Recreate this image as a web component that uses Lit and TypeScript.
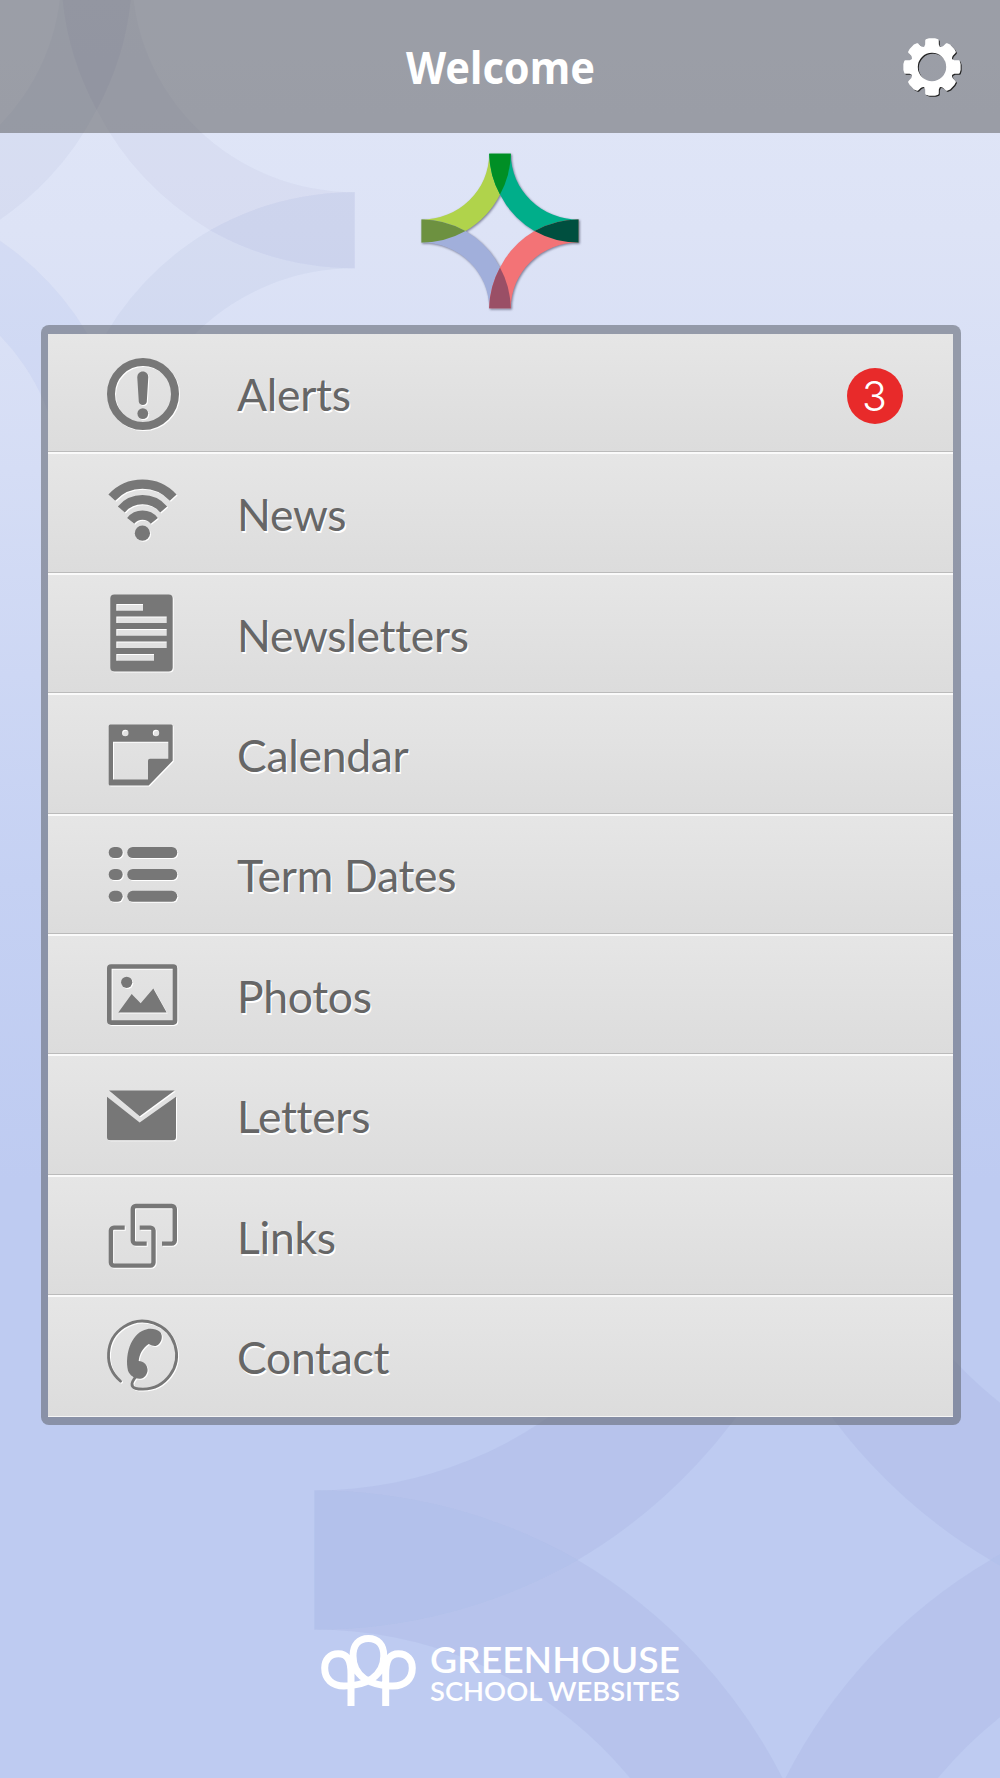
import { LitElement, html, css, svg } from "lit";
import type { TemplateResult } from "lit";
import { customElement, property } from "lit/decorators.js";

/* ---- Four-armed star built from quarter rings centred on its corners ---- */
const HW = 78.5;
const HH = 77.3;
const BX = 10.8;
const BY = 11.5;
const OUTER = `${HW + BX} ${HH + BY}`;
const INNER = `${HW - BX} ${HH - BY}`;
const CX = 34.5;
const CY = 36.5;
const BAND = `M${-HW} ${-BY}A${INNER} 0 0 0 ${-BX} ${-HH}L${BX} ${-HH}A${OUTER} 0 0 1 0 ${-CY}A${OUTER} 0 0 1 ${-CX} 0A${OUTER} 0 0 1 ${-HW} ${BY}Z`;
const LENS_TOP = `M${-BX} ${-HH}A${OUTER} 0 0 0 0 ${-CY}A${OUTER} 0 0 0 ${BX} ${-HH}Z`;
const LENS_LEFT = `M${-HW} ${-BY}A${OUTER} 0 0 1 ${-CX} 0A${OUTER} 0 0 1 ${-HW} ${BY}Z`;

interface StarColours {
  tl: string; tr: string; bl: string; br: string;
  top: string; left: string; right: string; bottom: string;
}

const star = (c: StarColours) => svg`
  <path d=${BAND} fill=${c.tl}></path>
  <path d=${BAND} fill=${c.tr} transform="scale(-1 1)"></path>
  <path d=${BAND} fill=${c.bl} transform="scale(1 -1)"></path>
  <path d=${BAND} fill=${c.br} transform="scale(-1 -1)"></path>
  <path d=${LENS_TOP} fill=${c.top}></path>
  <path d=${LENS_LEFT} fill=${c.left}></path>
  <path d=${LENS_LEFT} fill=${c.right} transform="scale(-1 1)"></path>
  <path d=${LENS_TOP} fill=${c.bottom} transform="scale(1 -1)"></path>`;

const LOGO: StarColours = {
  tl: "#b0d34b", tr: "#00ae8a", bl: "#a1afdb", br: "#f37376",
  top: "#008f25", left: "#6d9140", right: "#004f3f", bottom: "#9a4f66",
};

const TINT_A: StarColours = {
  tl: "rgba(140,160,200,.09)", tr: "rgba(150,155,200,.09)",
  bl: "rgba(140,160,225,.1)", br: "rgba(130,160,200,.09)",
  top: "rgba(120,130,190,.03)", left: "none",
  right: "rgba(150,170,255,.03)", bottom: "rgba(150,170,255,.05)",
};

const TINT_B: StarColours = {
  tl: "rgba(150,160,213,.17)", tr: "rgba(150,160,213,.17)",
  bl: "rgba(150,160,213,.17)", br: "rgba(150,160,213,.17)",
  top: "none", left: "rgba(185,210,245,.22)", right: "rgba(185,210,245,.22)", bottom: "none",
};

/* ---- Menu icons, each on a 90 x 120 canvas ---- */
const ICONS: Record<string, TemplateResult> = {
  alert: svg`
    <circle cx="43" cy="62" r="32" class="line" stroke-width="8"></circle>
    <path d="M42.8 39.6C46 39.6 48.4 42 48.3 45.5L46.8 69.5C46.6 71.8 45 73 42.8 73S39 71.8 38.8 69.5L37.3 45.5C37.2 42 39.6 39.6 42.8 39.6Z"></path>
    <circle cx="42.8" cy="81.6" r="5.4"></circle>`,
  wifi: svg`
    <path class="line" stroke-width="9.2" d="M11.8 45.7A41.7 41.7 0 0 1 73.2 45.7M21.3 57.4A28 28 0 0 1 63.7 57.4M30.7 68.8A15.2 15.2 0 0 1 54.3 68.8"></path>
    <circle cx="42.4" cy="81.2" r="7.6"></circle>`,
  news: svg`
    <path fill-rule="evenodd" d="M14.3 21.4H68.7a4 4 0 0 1 4 4V94.4a4 4 0 0 1-4 4H14.3a4 4 0 0 1-4-4V25.4a4 4 0 0 1 4-4Z
      M16.3 31.1V37.7H43V31.1ZM16.3 43.4V50H66.7V43.4ZM16.3 56.1V62.7H66.7V56.1ZM16.3 68.4V75H66.7V68.4ZM16.3 81.1V87.7H54V81.1Z"></path>`,
  calendar: svg`
    <path fill-rule="evenodd" d="M10.2 31.4H71.2a1.5 1.5 0 0 1 1.5 1.5V67.7L48.7 92.4H10.2a1.5 1.5 0 0 1-1.5-1.5V32.9a1.5 1.5 0 0 1 1.5-1.5Z
      M13 48.7V86.4H48V67.7a2 2 0 0 1 2-2H68.3V48.7Z
      M22.1 40a3.2 3.2 0 1 0 6.4 0a3.2 3.2 0 1 0-6.4 0ZM52.8 40a3.2 3.2 0 1 0 6.4 0a3.2 3.2 0 1 0-6.4 0Z"></path>`,
  list: svg`${[33, 55, 76.8].map((y) => svg`
    <rect x="8.7" y=${y} width="14" height="11" rx="5.5"></rect>
    <rect x="27.3" y=${y} width="50" height="11" rx="5.5"></rect>`)}`,
  photo: svg`
    <rect x="9.3" y="32.5" width="65.7" height="56.1" rx="1.8" class="line" stroke-width="4.6"></rect>
    <circle cx="26.7" cy="48.3" r="5.6"></circle>
    <path d="M18.3 78.6L31.7 59.9L40.7 69.2L53.3 54.6L66.7 78.6Z"></path>`,
  mail: svg`
    <path d="M9 36.5H74.7L39.7 62.2Z"></path>
    <path d="M7 42.8L39.7 68.5L76 42.8V83.2a3 3 0 0 1-3 3H10a3 3 0 0 1-3-3Z"></path>`,
  links: svg`
    <path class="line" stroke-width="4.4" d="M46.7 68.6H35.8a3 3 0 0 1-3-3V34a3 3 0 0 1 3-3H71.8a3 3 0 0 1 3 3V65.6a3 3 0 0 1-3 3H62
      M24.7 52.6H13.9a3 3 0 0 0-3 3V87.6a3 3 0 0 0 3 3H50.5a3 3 0 0 0 3-3V55.6a3 3 0 0 0-3-3H39.7"></path>`,
  phone: svg`
    <path class="line" stroke-width="2.8" stroke-linecap="round" d="M20.6 86.2A34 34 0 1 1 43 94.2C38 94.2 31.5 93.9 32 88.6C32.3 86.1 34 84.6 35.4 82"></path>
    <path d="M47 34.2C50.5 33.2 56.5 33.8 60.2 37C63 40.5 62 46 58.7 49.3C56 52.2 52.5 51.1 48.7 49.1C43 52.8 39.3 59.3 38.7 66C43.5 66.1 47.4 69.8 47.6 74.8C47.6 79.5 44 83.9 40 83.7C35 84 30 81 28 75.8C26 67.8 27 56.8 31 48.3C34.6 40.8 40 35.6 47 34.2Z"></path>`,
};

interface MenuItem { label: string; icon: string; count?: number }

const ITEMS: MenuItem[] = [
  { label: "Alerts", icon: "alert", count: 3 },
  { label: "News", icon: "wifi" },
  { label: "Newsletters", icon: "news" },
  { label: "Calendar", icon: "calendar" },
  { label: "Term Dates", icon: "list" },
  { label: "Photos", icon: "photo" },
  { label: "Letters", icon: "mail" },
  { label: "Links", icon: "links" },
  { label: "Contact", icon: "phone" },
];

/* Outline of an eight-toothed gear centred on the origin. */
const gearPath = (): string => {
  const pt = (r: number, deg: number) => {
    const a = (deg * Math.PI) / 180;
    return `${(r * Math.cos(a)).toFixed(2)} ${(r * Math.sin(a)).toFixed(2)}`;
  };
  const points: string[] = [];
  for (let i = 0; i < 8; i++) {
    const a = i * 45;
    points.push(pt(21.8, a - 21), pt(23.4, a - 17), pt(27.6, a - 14.2), pt(28.3, a - 12.5), pt(28.8, a - 6));
    points.push(pt(28.8, a + 6), pt(28.3, a + 12.5), pt(27.6, a + 14.2), pt(23.4, a + 17), pt(21.8, a + 21));
  }
  return `M${points.join("L")}ZM14.2 0A14.2 14.2 0 1 0 -14.2 0A14.2 14.2 0 1 0 14.2 0Z`;
};

@customElement("menu-row")
class MenuRow extends LitElement {
  @property({ attribute: false }) item!: MenuItem;

  static styles = css`
    :host { display: flex; align-items: flex-start; overflow: hidden; box-sizing: border-box; }
    .row {
      flex: 1; height: 120.4px; flex-shrink: 0; display: flex; align-items: center;
      padding: 0 50px 0 52px; box-sizing: border-box;
    }
    :host(:first-child) .row { margin-top: -1.9px; }
    .icon {
      width: 90px; height: 120px; flex: none; fill: #777; align-self: flex-start;
      filter: drop-shadow(1.3px 1.3px 0.4px #fff);
    }
    .line { fill: none; stroke: #777; }
    .label {
      flex: 1; margin-left: 47px; padding-top: 3px; font-size: 44.4px; line-height: 60px; color: #666;
      letter-spacing: -0.25px; font-variant-ligatures: none;
      text-shadow: 1.3px 1.5px 0.6px #fff;
    }
    .badge {
      width: 56px; height: 56px; border-radius: 50%; background: #e82a2a; color: #fff;
      display: flex; align-items: center; justify-content: center; margin-top: 7.5px;
      font: 300 41px/56px Inter, "Liberation Sans", sans-serif;
    }
  `;

  render() {
    const { label, icon, count } = this.item;
    return html`<div class="row">
      <svg class="icon" viewBox="0 0 90 120">${ICONS[icon]}</svg>
      <span class="label">${label}</span>
      ${count ? html`<span class="badge">${count}</span>` : null}
    </div>`;
  }
}

@customElement("app-root")
class AppRoot extends LitElement {
  static styles = css`
    :host {
      display: block; position: relative; width: 1000px; height: 1778px; overflow: hidden;
      font-family: Lato, "Liberation Sans", sans-serif;
      background: linear-gradient(#e1e7f8 0, #dde3f6 230px, #d5ddf5 470px, #c5d1f3 880px, #becbf1 1180px, #becbf1 100%);
    }
    .backdrop { position: absolute; inset: 0; width: 1000px; height: 1778px; }
    .page { position: relative; height: 100%; display: flex; flex-direction: column; }
    .bar {
      height: 133px; flex: none; background: rgba(86, 86, 86, 0.5); box-sizing: border-box;
      display: grid; grid-template-columns: 1fr auto 1fr; align-items: center;
    }
    .title { grid-column: 2; width: 190px; height: 133px; overflow: visible; }
    .title text { font: 700 44.6px "Noto Sans", "Open Sans", sans-serif; fill: #fff; }
    .gear {
      justify-self: end; width: 62px; height: 62px; margin: 1.4px 36.6px 0 0; fill: #fff;
      filter: drop-shadow(1px 1px 0.4px #222);
    }
    .logo {
      width: 170px; height: 170px; margin: 13.4px auto 0; display: block; flex: none; overflow: visible;
      filter: drop-shadow(1.2px 1.5px 0.8px rgba(60, 60, 90, 0.6));
    }
    .card {
      margin: 8.6px 39.5px 0 40.5px; padding: 9px 8px 8.5px 7.5px; border-radius: 8px; flex: none;
      background: rgba(99, 104, 113, 0.58); height: 1100.5px; box-sizing: border-box;
    }
    .panel {
      height: 1083px; display: grid; overflow: hidden;
      grid-template-rows: 118.5px repeat(7, 120.4px) 121.7px;
    }
    menu-row {
      background: linear-gradient(#e6e6e6, #dcdcdc);
      border-bottom: 1.6px solid #bbb; box-shadow: inset 0 2px 0 #fafafa;
    }
    menu-row:first-child { box-shadow: none; }
    menu-row:last-child { border-bottom: 1px solid #f4f4f4; }
    .brand { display: flex; justify-content: center; margin-top: 204.5px; }
    .brand svg { width: 370px; height: 80px; overflow: visible; }
    .brand text { font-weight: 600; fill: #fff; }
  `;

  render() {
    return html`
      <svg class="backdrop" viewBox="0 0 1000 1778">
        <g transform="translate(96.7 230.2) scale(3.287 3.3)">${star(TINT_A)}</g>
        <g transform="translate(784 1560) scale(5.98 6.05)">${star(TINT_B)}</g>
      </svg>
      <div class="page">
        <header class="bar">
          <svg class="title" viewBox="0 0 190 133">
            <text x="1" y="84" textLength="189" lengthAdjust="spacingAndGlyphs">Welcome</text>
          </svg>
          <svg class="gear" viewBox="-31 -31 62 62"><path fill-rule="evenodd" d=${gearPath()}></path></svg>
        </header>
        <svg class="logo" viewBox="-85 -85 170 170">${star(LOGO)}</svg>
        <main class="card">
          <nav class="panel">${ITEMS.map((item) => html`<menu-row .item=${item}></menu-row>`)}</nav>
        </main>
        <footer class="brand">
          <svg viewBox="0 0 370 80">
            <path fill="none" stroke="#fff" stroke-width="7" d="M36 76V44C36 31 33 23.8 23.3 23.8C14.5 23.8 9.7 30 9.7 38C9.7 49 17 56 29 56C51 56 68.8 46 68.8 26C68.8 15 63 8.5 53.4 8.5C43.8 8.5 38 15 38 26C38 46 55 56 77.8 56C90 56 97.3 49 97.3 38C97.3 30 92.3 23.8 83.5 23.8C74 23.8 70.7 31 70.7 44V76"></path>
            <text x="115" y="43.4" font-size="36.5" textLength="250" lengthAdjust="spacingAndGlyphs">GREENHOUSE</text>
            <text x="115" y="70.6" font-size="26.5" textLength="250" lengthAdjust="spacingAndGlyphs">SCHOOL WEBSITES</text>
          </svg>
        </footer>
      </div>`;
  }
}
